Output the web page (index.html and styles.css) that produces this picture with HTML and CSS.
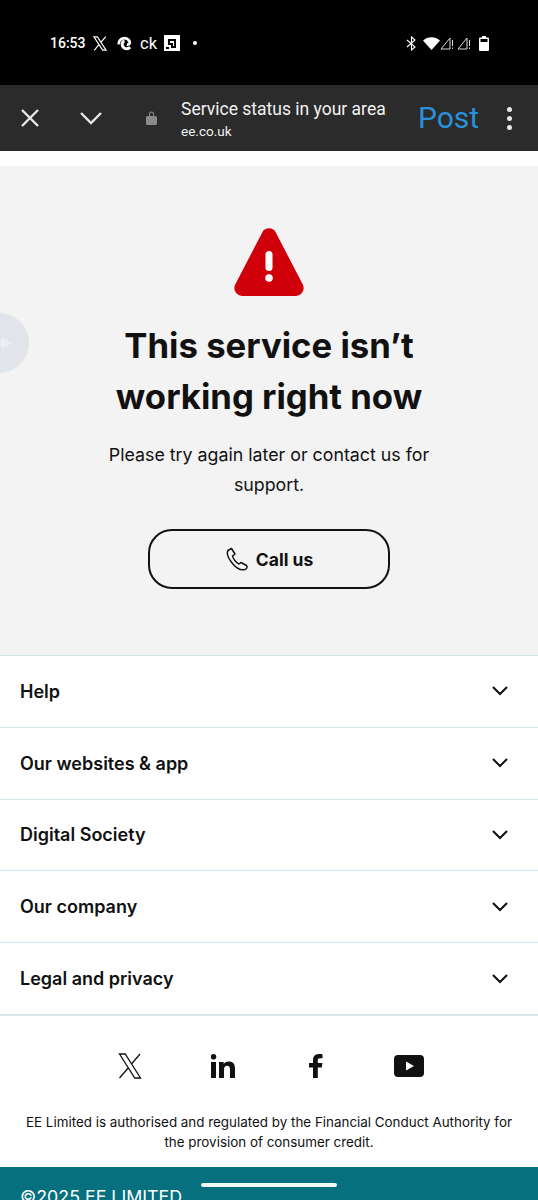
FILE: index.html
```html
<!DOCTYPE html>
<html lang="en">
<head>
    <meta charset="UTF-8">
    <meta name="viewport" content="width=device-width, initial-scale=1.0">
    <title>Service status in your area</title>
    <link rel="stylesheet" href="styles.css">
</head>
<body>
    <div class="status-bar">
        <div class="status-left">
            <span class="status-time">16:53</span>
            <svg class="status-x" width="14" height="15" viewBox="0 0 24 26"><path fill="none" stroke="#fff" stroke-width="2" d="M1.500 1.500h6L22.500 24.500h-6zM22 1l-8.500 10M10 15L2 25"/></svg>
            <svg class="status-edge" width="15" height="15" viewBox="0 0 16 16"><path fill="none" stroke="#fff" stroke-width="3" d="M2 9a6 6 0 0 1 11.500-3c.6 2-1 3.500-3 3.200M8 5.500C5 6 4.500 11 8 13c2 1 4.500.5 6-1"/></svg>
            <span class="status-ck">ck</span>
            <svg class="status-square" width="16" height="16" viewBox="0 0 16 16"><path fill="#fff" fill-rule="evenodd" d="M0 0h16v16H0zM4 4v6h3v3h5V4zM6 6h4v5H9V8H6zM2 12h3v2H2z"/></svg>
            <span class="status-dot"></span>
        </div>
        <div class="status-right">
            <svg width="11" height="15" viewBox="0 0 11 15"><path fill="none" stroke="#fff" stroke-width="1.100" d="M1 4l8 7-3.500 3V1L9 4l-8 7"/></svg>
            <svg class="status-wifi" width="17" height="13" viewBox="0 0 17 13"><path fill="#fff" d="M0 3.500C4.500-1 12.500-1 17 3.500L8.500 13z"/></svg>
            <svg width="14" height="14" viewBox="0 0 14 14"><path fill="none" stroke="#ddd" d="M1 13L10 2v11zM12.500 4v6M12.500 11.500v1.500"/></svg>
            <svg class="status-signal" width="14" height="14" viewBox="0 0 14 14"><path fill="none" stroke="#ddd" d="M1 13L10 2v11zM12.500 4v6M12.500 11.500v1.500"/></svg>
            <svg class="status-battery" width="10" height="15" viewBox="0 0 10 15"><path fill="#fff" d="M3 0h4v1.500h2a1 1 0 0 1 1 1V14a1 1 0 0 1-1 1H1a1 1 0 0 1-1-1V2.500a1 1 0 0 1 1-1h2z"/><path fill="#000" d="M1.500 3h7v3h-7z"/></svg>
        </div>
    </div>

    <div class="toolbar">
        <svg class="tool-close" width="18" height="18" viewBox="0 0 18 18"><path fill="none" stroke="#e8e8e8" stroke-width="2.400" d="M1 1l16 16M17 1L1 17"/></svg>
        <svg class="tool-down" width="22" height="14" viewBox="0 0 22 14"><path fill="none" stroke="#e8e8e8" stroke-width="2.400" d="M1 2l10 10L21 2"/></svg>
        <svg class="tool-lock" width="11" height="14" viewBox="0 0 11 14"><path fill="#8a8a8a" d="M3 5V3a2.500 2.500 0 0 1 5 0v2h1.500A1.500 1.500 0 0 1 11 6.500V12.500A1.500 1.500 0 0 1 9.500 14h-8A1.500 1.500 0 0 1 0 12.500V6.500A1.500 1.500 0 0 1 1.500 5zM4 5h3V3a1.500 1.500 0 0 0-3 0z"/></svg>
        <div class="tool-title">
            <div class="tool-page">Service status in your area</div>
            <div class="tool-url">ee.co.uk</div>
        </div>
        <span class="tool-post">Post</span>
        <div class="tool-menu"><span></span><span></span><span></span></div>
    </div>

    <div class="page-gap"></div>

    <div class="bubble">
        <svg width="14" height="14" viewBox="0 0 14 14"><path fill="none" stroke="#f4f6f9" d="M1 6v2M3 4v6M5 1v12M7 4v6M9 3v8M11 5v4M13 6v2"/></svg>
    </div>

    <div class="error-panel">
        <svg class="alert-icon" width="70" height="68" viewBox="0 0 70 68">
            <path fill="#d0000a" d="M28.500 4a7.500 7.500 0 0 1 13 0l27.300 52.500A8 8 0 0 1 62 68H8a8 8 0 0 1-6.800-11.500z"/>
            <rect x="31.500" y="23" width="7" height="20" rx="3.500" fill="#fff"/>
            <circle cx="35" cy="50" r="3.800" fill="#fff"/>
        </svg>
        <h1>This service isn&rsquo;t<br>working right now</h1>
        <p>Please try again later or contact us for support.</p>
        <a class="call-button" href="#">
            <svg width="24" height="24" viewBox="0 0 24 24"><path fill="none" stroke="#111" stroke-width="1.500" stroke-linejoin="round" d="M3 3.500L6.500 1.500 10 7 7.500 9C8 12 11.500 16 14 17L16 15.500 21.500 18.500C22.500 20 22 22 20 22.500 17 23.300 12 22 7.500 16.500 3 11 1.500 6 3 3.500z"/></svg>
            Call us
        </a>
    </div>

    <div class="accordion">
        <div class="accordion-row"><span>Help</span><svg width="16" height="10" viewBox="0 0 16 10"><path fill="none" stroke="#111" stroke-width="2" d="M1 1l7 7 7-7"/></svg></div>
        <div class="accordion-row"><span>Our websites &amp; app</span><svg width="16" height="10" viewBox="0 0 16 10"><path fill="none" stroke="#111" stroke-width="2" d="M1 1l7 7 7-7"/></svg></div>
        <div class="accordion-row"><span>Digital Society</span><svg width="16" height="10" viewBox="0 0 16 10"><path fill="none" stroke="#111" stroke-width="2" d="M1 1l7 7 7-7"/></svg></div>
        <div class="accordion-row"><span>Our company</span><svg width="16" height="10" viewBox="0 0 16 10"><path fill="none" stroke="#111" stroke-width="2" d="M1 1l7 7 7-7"/></svg></div>
        <div class="accordion-row"><span>Legal and privacy</span><svg width="16" height="10" viewBox="0 0 16 10"><path fill="none" stroke="#111" stroke-width="2" d="M1 1l7 7 7-7"/></svg></div>
    </div>

    <div class="social">
        <svg width="24" height="26" viewBox="0 0 24 26"><path fill="none" stroke="#111" stroke-width="1.300" d="M1.500 1h5.700L22.500 25h-5.700zM22 1l-8.500 10M10.200 15L1.500 25"/></svg>
        <svg width="24" height="24" viewBox="0 0 24 24"><path fill="#111" d="M0 8h5v16H0zM2.500 0a2.800 2.800 0 1 1 0 5.600 2.800 2.800 0 0 1 0-5.600zM8 8h4.700v2.200C13.600 8.700 15.400 7.600 17.700 7.600 22 7.600 24 10.200 24 14.600V24h-5V15.500C19 13 18.200 11.700 16.200 11.700 14.200 11.700 13 13 13 15.500V24H8z"/></svg>
        <svg width="14" height="24" viewBox="0 0 14 24"><path fill="#111" d="M4 24V13.500H0V9h4V6C4 2 6.400 0 10 0c1.500 0 3 .1 3.500.2v4H11c-1.800 0-2.200.9-2.200 2.200V9h4.600l-.6 4.500h-4V24z"/></svg>
        <svg width="30" height="22" viewBox="0 0 30 22"><path fill="#111" fill-rule="evenodd" d="M4 0h22a4 4 0 0 1 4 4v14a4 4 0 0 1-4 4H4a4 4 0 0 1-4-4V4a4 4 0 0 1 4-4zM12 6.500v9l8-4.500z"/></svg>
    </div>

    <p class="legal">EE Limited is authorised and regulated by the Financial Conduct Authority for the provision of consumer credit.</p>

    <div class="copyright">&copy;2025 EE LIMITED</div>

    <div class="home-bar"></div>
</body>
</html>
```

FILE: styles.css
```css
html, body {
    height: 1200px;
    overflow: hidden;
}

body {
    margin: 0;
    position: relative;
    font-family: "Inter", "Liberation Sans", sans-serif;
    background-color: #fff;
    color: #111;
}

.status-bar {
    height: 85px;
    background-color: #000;
    color: #fff;
    display: flex;
    justify-content: space-between;
    padding: 34px 49px 0 50px;
    box-sizing: border-box;
}

.status-left, .status-right {
    display: flex;
    align-items: center;
    height: 18px;
}

.status-time {
    font-family: "Roboto", sans-serif;
    font-size: 14px;
    font-weight: 500;
    width: 43px;
}

.status-edge {
    margin-left: 10px;
}

.status-ck {
    font-family: "Roboto", sans-serif;
    font-size: 16.5px;
    margin-left: 8px;
    width: 24px;
}

.status-dot {
    width: 4px;
    height: 4px;
    border-radius: 50%;
    background-color: #fff;
    margin-left: 13px;
}

.status-wifi {
    margin-left: 6px;
}

.status-signal {
    margin-left: 3px;
}

.status-battery {
    margin-left: 8px;
}

.toolbar {
    height: 66px;
    background-color: #2b2b2b;
    display: flex;
    align-items: center;
    padding-left: 21px;
    box-sizing: border-box;
}

.tool-down {
    margin-left: 41px;
}

.tool-lock {
    margin-left: 44px;
}

.tool-title {
    margin-left: 24px;
    width: 237px;
    padding-top: 2px;
    color: #f2f2f2;
    font-family: "Roboto", sans-serif;
}

.tool-page {
    font-size: 17.5px;
    line-height: 24px;
}

.tool-url {
    font-size: 13.5px;
    line-height: 20px;
}

.tool-post {
    font-family: "Roboto", sans-serif;
    font-size: 30px;
    color: #2a90dc;
    width: 89px;
    margin-top: -2px;
}

.tool-menu {
    display: flex;
    flex-direction: column;
    gap: 4px;
}

.tool-menu span {
    width: 5px;
    height: 5px;
    border-radius: 50%;
    background-color: #e8e8e8;
}

.page-gap {
    height: 15px;
}

.bubble {
    position: absolute;
    left: -31px;
    top: 313px;
    width: 60px;
    height: 60px;
    border-radius: 50%;
    background: linear-gradient(90deg, #dce6f3, #e3e4e6);
    display: flex;
    align-items: center;
    justify-content: flex-end;
}

.bubble svg {
    margin-right: 17px;
}

.error-panel {
    height: 489px;
    background-color: #f3f3f3;
    display: flex;
    flex-direction: column;
    align-items: center;
    padding-top: 62px;
    box-sizing: border-box;
}

.error-panel h1 {
    margin: 24px 0 0;
    font-size: 34.7px;
    line-height: 51px;
    font-weight: 700;
    text-align: center;
    color: #111;
}

.error-panel p {
    margin: 18px 0 0;
    width: 330px;
    font-size: 17.8px;
    line-height: 30px;
    text-align: center;
}

.call-button {
    margin-top: 29px;
    width: 242px;
    height: 60px;
    box-sizing: border-box;
    border: 2px solid #111;
    border-radius: 24px;
    display: flex;
    align-items: center;
    justify-content: center;
    gap: 7px;
    font-size: 17.5px;
    font-weight: 700;
    color: #111;
    text-decoration: none;
}

.accordion-row {
    height: 71.8px;
    box-sizing: border-box;
    border-top: 1px solid #cfe5ea;
    display: flex;
    align-items: center;
    justify-content: space-between;
    padding: 0 30px 0 20px;
    font-size: 18px;
    font-weight: 600;
}

.social {
    border-top: 2px solid #d8e8ec;
    height: 80px;
    box-sizing: border-box;
    padding: 22px 0 0 83px;
    display: grid;
    grid-template-columns: repeat(4, 93px);
    justify-items: center;
    align-items: center;
}

.legal {
    margin: 18px 0 0;
    padding: 0 20px;
    font-size: 13.4px;
    line-height: 20px;
    text-align: center;
}

.copyright {
    margin-top: 15px;
    height: 33px;
    background-color: #06707f;
    color: #fff;
    font-size: 17.8px;
    padding: 19px 20px 0;
    box-sizing: border-box;
    white-space: nowrap;
    overflow: hidden;
}

.home-bar {
    position: absolute;
    left: 201px;
    top: 1183px;
    width: 136px;
    height: 4px;
    border-radius: 2px;
    background-color: #f2fafa;
}
```
